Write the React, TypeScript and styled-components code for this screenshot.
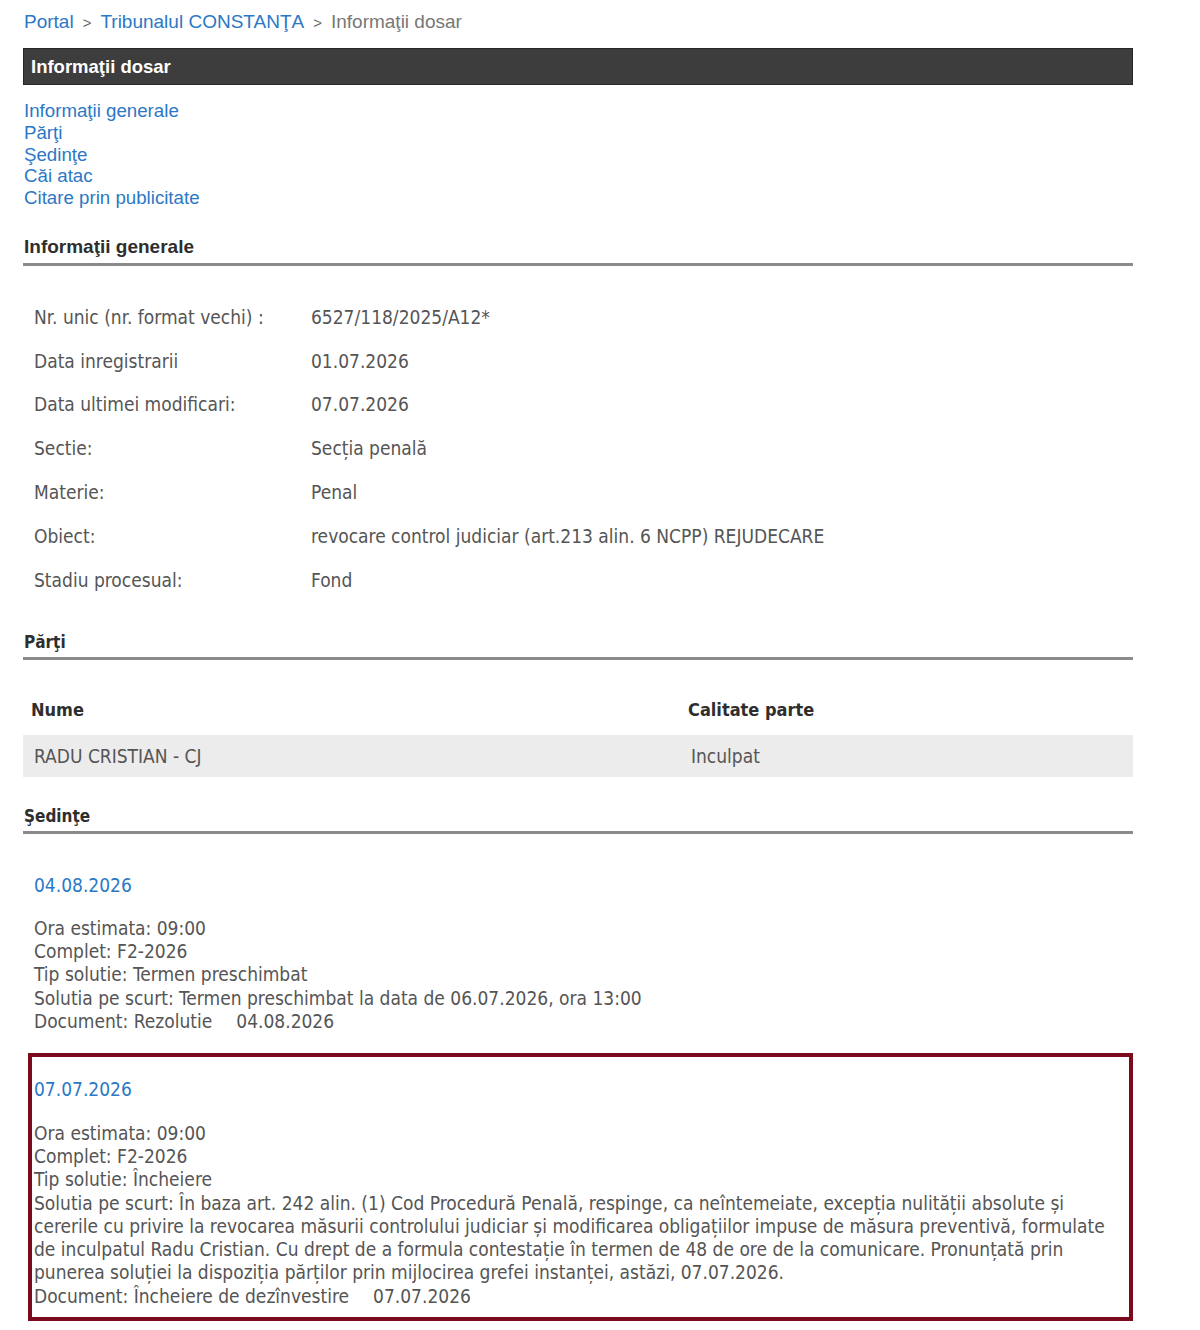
import { Fragment } from 'react';
import styled, { createGlobalStyle } from 'styled-components';

const GlobalStyle = createGlobalStyle`
  body {
    margin: 0;
    background: #fff;
  }
`;

const sans = `"Liberation Sans", Arial, sans-serif`;
const body = `"DejaVu Sans Condensed", "DejaVu Sans", Tahoma, sans-serif`;

interface IRow {
  label: string;
  value: string;
}

interface ISedinta {
  date: string;
  ora: string;
  complet: string;
  tip: string;
  solutie: string;
  document: string;
  documentDate: string;
}

const info: IRow[] = [
  { label: 'Nr. unic (nr. format vechi) :', value: '6527/118/2025/A12*' },
  { label: 'Data inregistrarii', value: '01.07.2026' },
  { label: 'Data ultimei modificari:', value: '07.07.2026' },
  { label: 'Sectie:', value: 'Secția penală' },
  { label: 'Materie:', value: 'Penal' },
  { label: 'Obiect:', value: 'revocare control judiciar (art.213 alin. 6 NCPP) REJUDECARE' },
  { label: 'Stadiu procesual:', value: 'Fond' },
];

const sedinte: ISedinta[] = [
  {
    date: '04.08.2026',
    ora: '09:00',
    complet: 'F2-2026',
    tip: 'Termen preschimbat',
    solutie: 'Termen preschimbat la data de 06.07.2026, ora 13:00',
    document: 'Rezolutie',
    documentDate: '04.08.2026',
  },
  {
    date: '07.07.2026',
    ora: '09:00',
    complet: 'F2-2026',
    tip: 'Încheiere',
    solutie:
      'În baza art. 242 alin. (1) Cod Procedură Penală, respinge, ca neîntemeiate, excepția nulității absolute și cererile cu privire la revocarea măsurii controlului judiciar și modificarea obligațiilor impuse de măsura preventivă, formulate de inculpatul Radu Cristian. Cu drept de a formula contestație în termen de 48 de ore de la comunicare. Pronunțată prin punerea soluției la dispoziția părților prin mijlocirea grefei instanței, astăzi, 07.07.2026.',
    document: 'Încheiere de dezînvestire',
    documentDate: '07.07.2026',
  },
];

const Page = styled.div`
  width: 1110px;
  padding: 10px 0 0 23px;
`;

const Breadcrumb = styled.div`
  display: flex;
  align-items: center;
  gap: 9px;
  height: 24px;
  padding-left: 1px;
  font-family: ${sans};
  font-size: 19px;
  color: #777;
`;

const Crumb = styled.a`
  color: #2b78c5;
  text-decoration: none;
`;

const Sep = styled.span`
  font-size: 15px;
  color: #666;
`;

const TitleBar = styled.div`
  margin-top: 14px;
  height: 35px;
  display: flex;
  align-items: center;
  padding-left: 7px;
  background: #3d3d3d;
  border: 1px solid #262626;
  font-family: ${sans};
  font-size: 18.5px;
  font-weight: bold;
  color: #fff;
`;

const Links = styled.nav`
  display: flex;
  flex-direction: column;
  margin-top: 15px;
  padding-left: 1px;
`;

const NavLink = styled.a`
  font-family: ${sans};
  font-size: 18.7px;
  line-height: 21.8px;
  color: #2b78c5;
  text-decoration: none;
`;

const SectionTitle = styled.h3<{ $tahoma?: boolean; $top: number }>`
  margin: ${(p) => p.$top}px 0 0;
  padding: 0 0 ${(p) => (p.$tahoma ? 3 : 4)}px 1px;
  border-bottom: 3px solid #8a8a8a;
  font-family: ${(p) => (p.$tahoma ? body : sans)};
  font-size: ${(p) => (p.$tahoma ? 17 : 19)}px;
  font-weight: bold;
  line-height: 24px;
  color: #2e2e2e;
`;

const InfoTable = styled.div`
  display: grid;
  grid-template-columns: 277px 1fr;
  grid-auto-rows: 43.8px;
  align-items: center;
  margin-top: 29px;
  padding-left: 11px;
  font-family: ${body};
  font-size: 19px;
  color: #555;
`;

const PartiTable = styled.div`
  margin-top: 25px;
  font-family: ${body};
  font-size: 19px;
`;

const PartiRow = styled.div<{ $head?: boolean }>`
  display: grid;
  grid-template-columns: 657px 1fr;
  align-items: center;
  height: ${(p) => (p.$head ? 50 : 42)}px;
  padding-left: ${(p) => (p.$head ? 8 : 11)}px;
  background: ${(p) => (p.$head ? 'transparent' : '#ececec')};
  font-size: ${(p) => (p.$head ? 18 : 19)}px;
  font-weight: ${(p) => (p.$head ? 'bold' : 'normal')};
  color: ${(p) => (p.$head ? '#2e2e2e' : '#555')};
`;

const Sedinta = styled.div<{ $marked?: boolean }>`
  margin: ${(p) => (p.$marked ? '20px 0 0 5px' : '40px 0 0')};
  padding: ${(p) => (p.$marked ? '21px 0 9px 2px' : '0 0 0 11px')};
  border: ${(p) => (p.$marked ? '4px solid #7a0a1c' : 'none')};
  font-family: ${body};
  font-size: 19px;
  line-height: 23.3px;
  color: #555;
`;

const DateLink = styled.a`
  display: block;
  margin-bottom: 20px;
  color: #2b78c5;
  text-decoration: none;
`;

const Line = styled.div``;

const DocDate = styled.span`
  margin-left: 24px;
`;

function SedintaBlock({ s, marked }: { s: ISedinta; marked?: boolean }) {
  return (
    <Sedinta $marked={marked}>
      <DateLink href="#">{s.date}</DateLink>
      <Line>{`Ora estimata: ${s.ora}`}</Line>
      <Line>{`Complet: ${s.complet}`}</Line>
      <Line>{`Tip solutie: ${s.tip}`}</Line>
      <Line>{`Solutia pe scurt: ${s.solutie}`}</Line>
      <Line>
        {`Document: ${s.document}`}
        <DocDate>{s.documentDate}</DocDate>
      </Line>
    </Sedinta>
  );
}

export default function App() {
  return (
    <Page>
      <GlobalStyle />
      <Breadcrumb>
        <Crumb href="#">Portal</Crumb>
        <Sep>&gt;</Sep>
        <Crumb href="#">Tribunalul CONSTANŢA</Crumb>
        <Sep>&gt;</Sep>
        <span>Informaţii dosar</span>
      </Breadcrumb>
      <TitleBar>Informaţii dosar</TitleBar>
      <Links>
        <NavLink href="#">Informaţii generale</NavLink>
        <NavLink href="#">Părţi</NavLink>
        <NavLink href="#">Şedinţe</NavLink>
        <NavLink href="#">Căi atac</NavLink>
        <NavLink href="#">Citare prin publicitate</NavLink>
      </Links>

      <SectionTitle $top={26}>Informaţii generale</SectionTitle>
      <InfoTable>
        {info.map((r) => (
          <Fragment key={r.label}>
            <span>{r.label}</span>
            <span>{r.value}</span>
          </Fragment>
        ))}
      </InfoTable>

      <SectionTitle $tahoma $top={28}>Părţi</SectionTitle>
      <PartiTable>
        <PartiRow $head>
          <span>Nume</span>
          <span>Calitate parte</span>
        </PartiRow>
        <PartiRow>
          <span>RADU CRISTIAN - CJ</span>
          <span>Inculpat</span>
        </PartiRow>
      </PartiTable>

      <SectionTitle $tahoma $top={27}>Şedinţe</SectionTitle>
      <SedintaBlock s={sedinte[0]} />
      <SedintaBlock s={sedinte[1]} marked />
    </Page>
  );
}
